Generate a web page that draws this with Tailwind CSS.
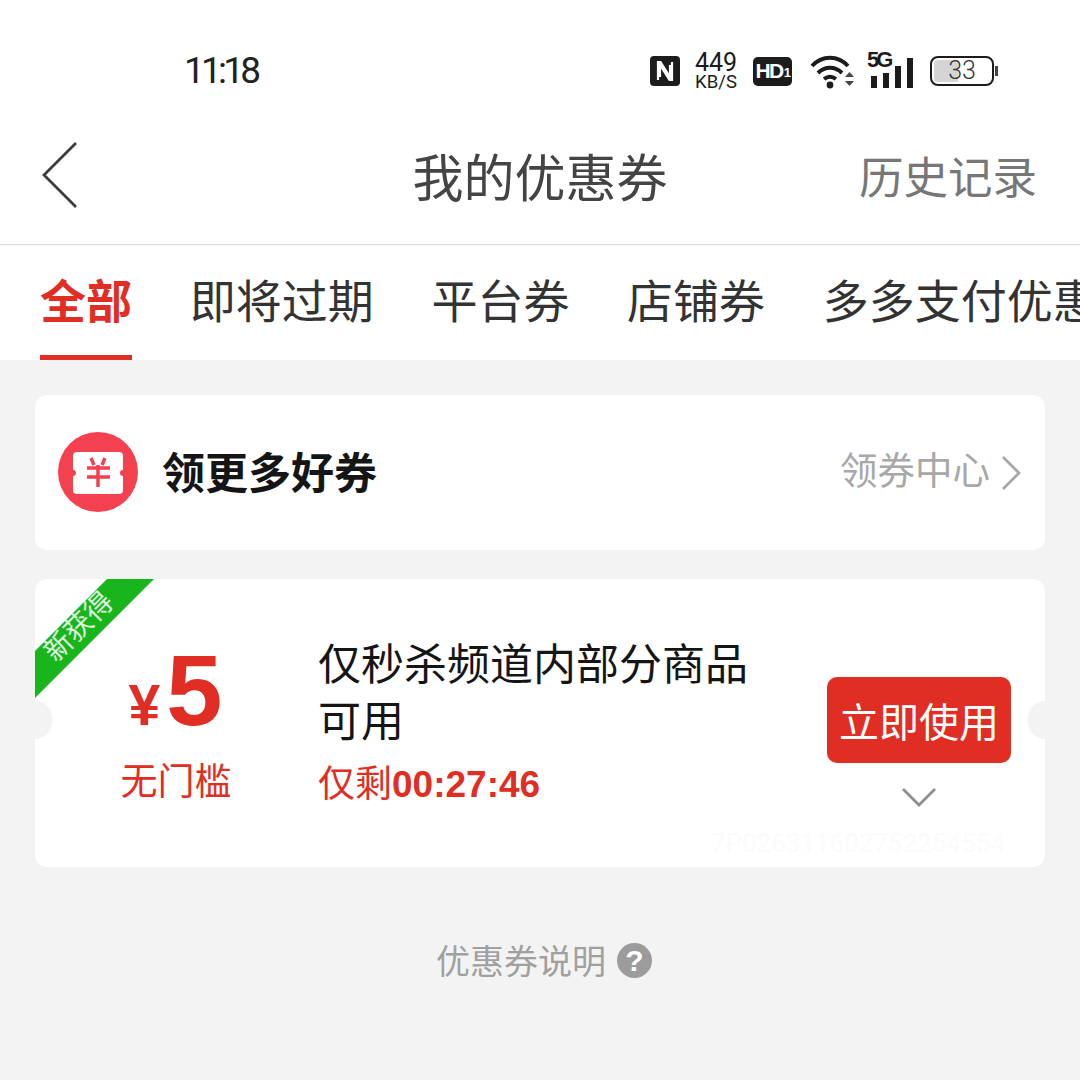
<!DOCTYPE html>
<html lang="zh-CN">
<head>
<meta charset="utf-8">
<script src="https://cdn.jsdelivr.net/npm/@tailwindcss/browser@4"></script>
</head>
<body class="m-0 bg-[#f3f3f3] font-['Noto_Sans_CJK_SC','Noto_Sans',sans-serif]">
<div class="w-[1080px] h-[1080px] overflow-hidden flex flex-col">
  <!-- status bar -->
  <div class="h-[120px] bg-white flex items-start pt-[51px] pr-[82px] pl-[184px] justify-between shrink-0">
    <div class="text-[37px] leading-[40px] text-[#222] font-['Roboto',sans-serif] tracking-[-3.800px]">11:18</div>
    <div class="flex items-center h-[40px] text-[#1c1c1c]">
      <svg width="32" height="32" viewBox="0 0 32 32" class="mr-[13px]"><rect x="1" y="1" width="30" height="30" rx="4" fill="#1c1c1c"/><path d="M9 25V7h2.500l9.500 15V10M23 7v18h-2.500L11 10v12" fill="none" stroke="#fff" stroke-width="2.200"/></svg>
      <div class="w-[44px] flex flex-col items-center mr-[15px] font-['Roboto',sans-serif]">
        <span class="text-[25px] leading-[22px]">449</span>
        <span class="text-[18.500px] leading-[17px]">KB/S</span>
      </div>
      <div class="w-[39px] h-[29px] bg-[#1c1c1c] rounded-[5px] flex items-center justify-center text-white text-[21px] font-bold font-['Liberation_Sans',sans-serif] mr-[18px] tracking-[-1.500px]">HD<span class="text-[13px] mt-[4px] ml-[1px]">1</span></div>
      <svg width="46" height="36" viewBox="0 0 46 36" class="mr-[12px]"><path d="M2 13C12 2 28 2 38 13M8 20c7-7 17-7 24 0M14 26c4-3 8-3 12 0" fill="none" stroke="#1c1c1c" stroke-width="4"/><circle cx="20" cy="32" r="3.400" fill="#1c1c1c"/><path d="M35 24l4.500-5 4.500 5zM35 28l4.500 5 4.500-5z" fill="#444"/></svg>
      <div class="relative w-[48px] h-[36px] mr-[14px]">
        <span class="absolute left-[-1px] top-[-3px] text-[22px] leading-[20px] font-bold font-['Liberation_Sans',sans-serif] tracking-[-3px]">5G</span>
        <div class="absolute bottom-[1px] left-[3px] flex items-end gap-[6px]">
          <div class="w-[6px] h-[12px] bg-[#1c1c1c]"></div>
          <div class="w-[6px] h-[15px] bg-[#1c1c1c]"></div>
          <div class="w-[6px] h-[22px] bg-[#1c1c1c]"></div>
          <div class="w-[6px] h-[30px] bg-[#1c1c1c]"></div>
        </div>
      </div>
      <div class="w-[64px] h-[30px] border-[2px] border-[#1c1c1c] rounded-[8px] relative overflow-hidden p-[2px]">
        <div class="w-[24px] h-full bg-[#d5d5d5] rounded-l-[4px]"></div>
        <span class="absolute inset-0 flex items-center justify-center text-[25px] text-[#333] font-['Roboto',sans-serif] font-light">33</span>
      </div>
      <div class="w-[3px] h-[10px] bg-[#444] ml-[1px]"></div>
    </div>
  </div>
  <!-- nav bar -->
  <div class="h-[125px] bg-white border-b border-[#d9d9d9] relative flex items-center justify-center shrink-0">
    <svg width="38" height="68" viewBox="0 0 38 68" class="absolute left-[41px] top-[21px]"><path d="M35 2L3 34l32 32" fill="none" stroke="#3c3c3c" stroke-width="2.800"/></svg>
    <span class="text-[51px] leading-[60px] text-[#444] mt-[-14px]">我的优惠券</span>
    <span class="absolute right-[43px] top-[25px] text-[44.500px] leading-[60px] text-[#777]">历史记录</span>
  </div>
  <!-- tabs -->
  <div class="h-[115px] bg-white flex items-start gap-[57.700px] pl-[40px] pt-[23px] shrink-0 whitespace-nowrap overflow-hidden text-[46px] leading-[60px] text-[#333]">
    <div class="relative font-bold text-[#e02e24]">全部<div class="absolute left-0 right-0 top-[87px] h-[5px] bg-[#e02e24]"></div></div>
    <span>即将过期</span>
    <span>平台券</span>
    <span>店铺券</span>
    <span>多多支付优惠券</span>
  </div>
  <!-- content -->
  <div class="flex-1 px-[35px] pt-[35px] flex flex-col">
    <div class="h-[155px] bg-white rounded-[12px] flex items-center pl-[23px] pr-[23px] shrink-0">
      <svg width="80" height="80" viewBox="0 0 80 80" class="mr-[24px] mt-[-2px]"><circle cx="40" cy="40" r="40" fill="#f4414f"/><path d="M19 20h42a4 4 0 0 1 4 4v14a3 3 0 0 0 0 6v14a4 4 0 0 1-4 4H19a4 4 0 0 1-4-4V44a3 3 0 0 0 0-6V24a4 4 0 0 1 4-4z" fill="#fff"/><path d="M33 26l3 7M47 26l-3 7M29 36h23M29 45h23M40 33v22" fill="none" stroke="#f4414f" stroke-width="3.500"/></svg>
      <span class="text-[43px] leading-[60px] font-bold text-[#151516] mt-[-6px]">领更多好券</span>
      <span class="ml-auto text-[37.500px] leading-[50px] text-[#a8a8a8] mt-[-10px]">领券中心</span>
      <svg width="22" height="36" viewBox="0 0 22 36" class="ml-[10px]"><path d="M3 2l16 16L3 34" fill="none" stroke="#a8a8a8" stroke-width="2.800"/></svg>
    </div>
    <div class="mt-[29px] h-[288px] bg-white rounded-[12px] relative overflow-hidden flex shrink-0">
      <!-- ribbon -->
      <div class="absolute left-0 top-0 w-[119px] h-[119px] bg-[#18b51d] [clip-path:polygon(72px_0,119px_0,0_119px,0_72px)]"></div>
      <span class="absolute left-0 top-[31px] w-[84px] text-center text-[28px] leading-[30px] text-[#dff5df] -rotate-45 whitespace-nowrap">新获得</span>
      <!-- notches -->
      <div class="absolute left-[-17px] top-[122px] w-[34px] h-[38px] rounded-full bg-[#f3f3f3]"></div>
      <div class="absolute right-[-17px] top-[122px] w-[34px] h-[38px] rounded-full bg-[#f3f3f3]"></div>
      <!-- amount -->
      <div class="w-[283px] flex flex-col items-center pt-[64px] shrink-0 text-[#e02e24]">
        <div class="flex items-baseline h-[94px] ml-[-2px] font-['Liberation_Sans',sans-serif] font-bold">
          <span class="text-[57px] leading-[94px] mr-[6px]">¥</span>
          <span class="text-[101px] leading-[94px]">5</span>
        </div>
        <span class="text-[37px] leading-[50px] mt-[17px] ml-[-1px]">无门槛</span>
      </div>
      <!-- description -->
      <div class="w-[440px] pt-[54px] shrink-0">
        <div class="text-[43px] leading-[57px] text-[#151516]">仅秒杀频道内部分商品可用</div>
        <div class="text-[37px] leading-[50px] mt-[9px] text-[#e02e24]">仅剩<span class="font-bold font-['Liberation_Sans',sans-serif]">00:27:46</span></div>
      </div>
      <!-- action -->
      <div class="flex-1 flex flex-col items-center pt-[98px] relative">
        <div class="w-[184px] h-[86px] ml-[35px] bg-[#e02e24] rounded-[10px] flex items-center justify-center text-[40px] leading-[50px] text-white">立即使用</div>
        <svg width="36" height="20" viewBox="0 0 36 20" class="ml-[35px] mt-[24px]"><path d="M2 2l16 16L34 2" fill="none" stroke="#8f8f8f" stroke-width="2.800"/></svg>
        <span class="absolute right-[40px] top-[249px] text-[26px] leading-[30px] text-[#fbfbfb] font-['Roboto',sans-serif] whitespace-nowrap">7P026311602752254554</span>
      </div>
    </div>
    <div class="mt-[64px] flex items-center justify-center ml-[8px] gap-[11px]">
      <span class="text-[34px] leading-[58px] text-[#a0a0a0]">优惠券说明</span>
      <div class="w-[35px] h-[35px] rounded-full bg-[#9c9c9c] flex items-center justify-center text-white text-[30px] font-bold font-['Liberation_Sans',sans-serif]">?</div>
    </div>
  </div>
</div>
</body>
</html>
